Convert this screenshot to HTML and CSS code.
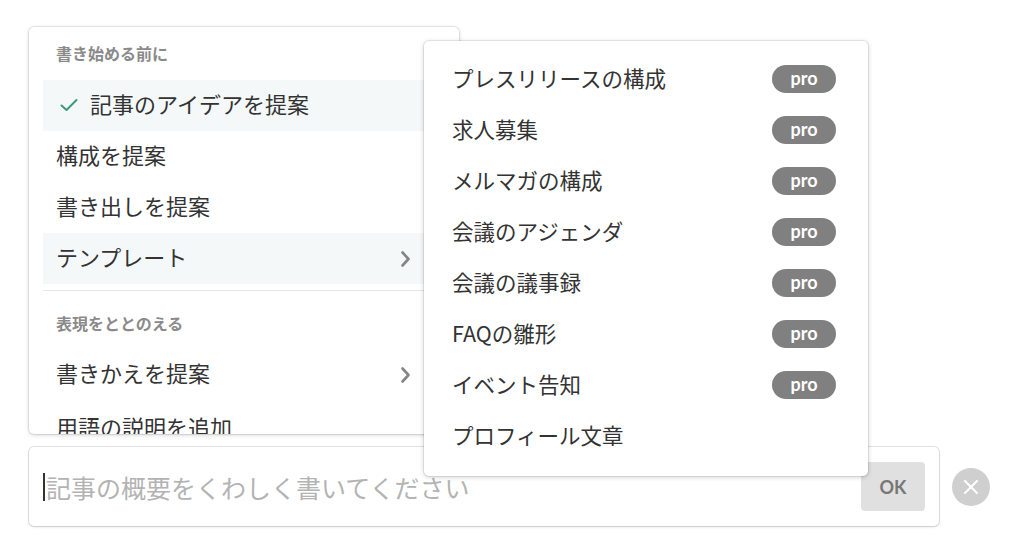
FILE: index.html
```html
<!DOCTYPE html>
<html lang="ja">
<head>
<meta charset="utf-8">
<title>AIアシスト</title>
<link rel="stylesheet" href="styles.css">
</head>
<body>
<div class="stage">
  <div class="menu">
    <div class="menu-scroll">
      <div class="heading">書き始める前に</div>
      <div class="item active">
        <svg class="check" width="18" height="14" viewBox="0 0 18 14"><path d="M1.5 7.5 L6.5 12 L16.5 2" fill="none" stroke="#3a9a7c" stroke-width="2" stroke-linecap="round" stroke-linejoin="round"/></svg>
        <span>記事のアイデアを提案</span>
      </div>
      <div class="item">構成を提案</div>
      <div class="item">書き出しを提案</div>
      <div class="item hover">
        <span>テンプレート</span>
        <svg class="chev" width="11" height="18" viewBox="0 0 11 18"><path d="M2.5 2.5 L8.5 9 L2.5 15.5" fill="none" stroke="#858585" stroke-width="2.6" stroke-linecap="round" stroke-linejoin="round"/></svg>
      </div>
      <div class="sep"></div>
      <div class="heading second">表現をととのえる</div>
      <div class="item">
        <span>書きかえを提案</span>
        <svg class="chev" width="11" height="18" viewBox="0 0 11 18"><path d="M2.5 2.5 L8.5 9 L2.5 15.5" fill="none" stroke="#858585" stroke-width="2.6" stroke-linecap="round" stroke-linejoin="round"/></svg>
      </div>
      <div class="item last">用語の説明を追加</div>
    </div>
  </div>

  <div class="input-row">
    <div class="input-box">
      <div class="field"><span class="caret"></span><span class="placeholder">記事の概要をくわしく書いてください</span></div>
      <button class="ok">OK</button>
    </div>
    <button class="close" aria-label="閉じる">
      <svg width="16" height="16" viewBox="0 0 16 16"><path d="M2 2 L14 14 M14 2 L2 14" stroke="#fff" stroke-width="2.2" stroke-linecap="round"/></svg>
    </button>
  </div>

  <div class="submenu">
    <div class="sub-item"><span>プレスリリースの構成</span><span class="pro">pro</span></div>
    <div class="sub-item"><span>求人募集</span><span class="pro">pro</span></div>
    <div class="sub-item"><span>メルマガの構成</span><span class="pro">pro</span></div>
    <div class="sub-item"><span>会議のアジェンダ</span><span class="pro">pro</span></div>
    <div class="sub-item"><span>会議の議事録</span><span class="pro">pro</span></div>
    <div class="sub-item"><span>FAQの雛形</span><span class="pro">pro</span></div>
    <div class="sub-item"><span>イベント告知</span><span class="pro">pro</span></div>
    <div class="sub-item"><span>プロフィール文章</span></div>
  </div>
</div>
</body>
</html>
```

FILE: styles.css
```css
* { box-sizing: border-box; }
html, body { margin: 0; padding: 0; background: #fff; }
body {
  font-family: "Noto Sans CJK JP", "Noto Sans", sans-serif;
  color: #333;
  width: 1024px;
  height: 543px;
  overflow: hidden;
}
.stage {
  position: relative;
  padding: 27px 0 0 29px;
  display: flex;
  flex-direction: column;
  gap: 13px;
}
.menu {
  width: 430px;
  height: 407px;
  background: #fff;
  border-radius: 5px;
  box-shadow: 0 0 0 1px rgba(0,0,0,0.07), 0 1px 4px rgba(0,0,0,0.18);
  overflow: hidden;
}
.menu-scroll {
  padding: 0 14px;
  display: flex;
  flex-direction: column;
}
.heading {
  padding: 14px 13px 15px;
  font-size: 16px;
  line-height: 24px;
  font-weight: 700;
  color: #8a8a8a;
}
.heading.second { padding: 20px 13px 14px; }
.item {
  height: 51px;
  padding: 0 13px 5px;
  display: flex;
  align-items: center;
  font-size: 22px;
  line-height: 30px;
  color: #333;
  white-space: nowrap;
}
.item.last { padding-bottom: 0; }
.item.active, .item.hover { background: #f5f8f9; }
.item .check { margin: 4px 12px 0 4px; flex: none; }
.item .chev { margin: 5px 21px 0 auto; flex: none; }
.sep {
  height: 1px;
  background: #e6e6e6;
  margin-top: 6px;
}
.input-row {
  display: flex;
  align-items: center;
  gap: 13px;
}
.input-box {
  width: 910px;
  height: 79px;
  border-radius: 5px;
  box-shadow: 0 0 0 1px rgba(0,0,0,0.1), 0 1px 3px rgba(0,0,0,0.12);
  background: #fff;
  display: flex;
  align-items: center;
  padding: 0 14px 0 14px;
}
.field {
  flex: 1;
  display: flex;
  align-items: center;
}
.caret {
  width: 2px;
  height: 28px;
  background: #333;
  margin-right: 1px;
}
.placeholder {
  font-size: 25px;
  color: #b3b3b3;
  line-height: 40px;
}
.ok {
  width: 64px;
  height: 49px;
  border: none;
  border-radius: 4px;
  background: #e0e0e0;
  color: #777;
  font-family: "Lato", "Noto Sans", sans-serif;
  font-weight: 700;
  font-size: 18px;
  padding: 0;
}
.close {
  width: 38px;
  height: 38px;
  border-radius: 50%;
  border: none;
  background: #cfcfcf;
  display: flex;
  align-items: center;
  justify-content: center;
  padding: 0;
}
.submenu {
  position: absolute;
  left: 424px;
  top: 41px;
  width: 444px;
  height: 435px;
  background: #fff;
  border-radius: 5px;
  box-shadow: 0 0 0 1px rgba(0,0,0,0.07), 0 1px 5px rgba(0,0,0,0.2);
  padding: 12px 32px 15px 28px;
  display: flex;
  flex-direction: column;
}
.sub-item {
  height: 51px;
  display: flex;
  align-items: center;
  justify-content: space-between;
  font-size: 21.5px;
  color: #333;
  white-space: nowrap;
}
.sub-item span:first-child { padding-bottom: 2px; }
.pro {
  width: 64px;
  height: 28px;
  border-radius: 14px;
  background: #808080;
  color: #fff;
  font-family: "Lato", "Noto Sans", sans-serif;
  font-weight: 700;
  font-size: 18px;
  line-height: 26px;
  text-align: center;
}
```
